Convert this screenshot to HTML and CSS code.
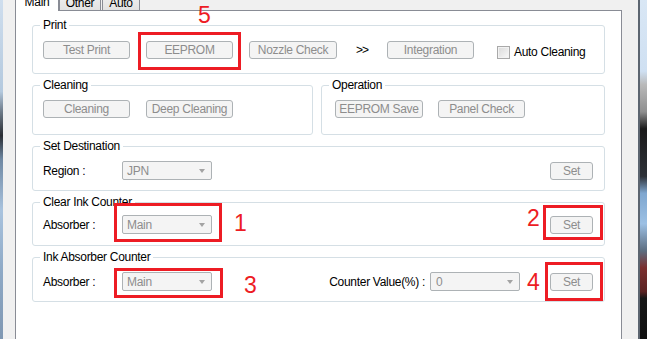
FILE: index.html
```html
<!DOCTYPE html>
<html lang="en">
<head>
<meta charset="utf-8">
<title>Maintenance</title>
<link rel="stylesheet" href="styles.css">
</head>
<body>
<div class="screen">
  <div class="desk desk-left"></div>
  <div class="window">
    <div class="tabs">
      <div class="tab tab-main active">Main</div>
      <div class="tab tab-other">Other</div>
      <div class="tab tab-auto">Auto</div>
    </div>
    <div class="panel">
      <fieldset class="group group-print">
        <legend>Print</legend>
        <div class="row">
          <button class="btn w87" disabled>Test Print</button>
          <button class="btn w87" disabled>EEPROM</button>
          <button class="btn w88" disabled>Nozzle Check</button>
          <span class="arrows">&gt;&gt;</span>
          <button class="btn w87" disabled>Integration</button>
          <label class="check"><span class="check-box"></span>Auto Cleaning</label>
        </div>
      </fieldset>

      <div class="split">
        <fieldset class="group group-clean">
          <legend>Cleaning</legend>
          <div class="row">
            <button class="btn w87" disabled>Cleaning</button>
            <button class="btn w87" disabled>Deep Cleaning</button>
          </div>
        </fieldset>
        <fieldset class="group group-clean">
          <legend>Operation</legend>
          <div class="row row-op">
            <button class="btn w88" disabled>EEPROM Save</button>
            <button class="btn w87" disabled>Panel Check</button>
          </div>
        </fieldset>
      </div>

      <fieldset class="group group-dest">
        <legend>Set Destination</legend>
        <div class="row row-field">
          <span class="label">Region :</span>
          <span class="combo">JPN<span class="caret"></span></span>
          <button class="btn btn-set" disabled>Set</button>
        </div>
      </fieldset>

      <fieldset class="group group-clear">
        <legend>Clear Ink Counter</legend>
        <div class="row row-field">
          <span class="label">Absorber :</span>
          <span class="combo">Main<span class="caret"></span></span>
          <button class="btn btn-set" disabled>Set</button>
        </div>
      </fieldset>

      <fieldset class="group group-ink">
        <legend>Ink Absorber Counter</legend>
        <div class="row row-field">
          <span class="label">Absorber :</span>
          <span class="combo">Main<span class="caret"></span></span>
          <span class="label-right">Counter Value(%) :</span>
          <span class="combo combo-value">0<span class="caret"></span></span>
          <button class="btn btn-set btn-set-ink" disabled>Set</button>
        </div>
      </fieldset>
    </div>
  </div>
  <div class="desk desk-right"></div>

  <div class="mark mark-5"></div>
  <div class="mark mark-1"></div>
  <div class="mark mark-2"></div>
  <div class="mark mark-3"></div>
  <div class="mark mark-4"></div>
  <span class="num num-5">5</span>
  <span class="num num-1">1</span>
  <span class="num num-2">2</span>
  <span class="num num-3">3</span>
  <span class="num num-4">4</span>
</div>
</body>
</html>
```

FILE: styles.css
```css
* { box-sizing: border-box; }

body {
  margin: 0;
  background: #f0f0f0;
  font-family: "Liberation Sans", Arial, sans-serif;
  font-size: 12px;
  letter-spacing: -0.3px;
  color: #000;
}

.screen {
  position: relative;
  display: flex;
  width: 647px;
  height: 339px;
  overflow: hidden;
}

.desk-left {
  width: 3px;
  background: linear-gradient(to bottom,
    #cfdeee 0%, #b4c9de 27%, #6d7a88 33%, #2a2e34 40%,
    #6f88a3 47%, #a9c3de 62%, #8ea9c6 80%, #7f97b2 100%);
}

.window {
  width: 635px;
  padding: 0 16px 0 12px;
  background: #f0f0f0;
  display: flex;
  flex-direction: column;
}

.desk-right {
  width: 9px;
  border-left: 2px solid #5c6570;
  background: linear-gradient(to bottom,
    #d9e7f5 0%, #cfe0f2 21%, #b9b9b9 25%, #8e8e8e 33%,
    #1a1a1a 38%, #2d3138 52%, #7ea6cf 57%, #9cc0e4 66%,
    #5c6d80 74%, #7b2f2f 79%, #5a2222 86%, #161616 88%, #101010 100%);
}

/* tabs */
.tabs {
  display: flex;
  align-items: flex-end;
  height: 20px;
  margin-top: -10px;
}

.tab {
  height: 20px;
  border: 1px solid #898c95;
  border-bottom: none;
  background: linear-gradient(#f3f3f3, #e2e2e2);
  text-align: center;
  line-height: 14px;
  padding-top: 5px;
}

.tab.active {
  position: relative;
  z-index: 1;
  height: 21px;
  margin-bottom: -1px;
  padding-top: 4px;
  background: #fff;
}

.tab-main { width: 44px; }
.tab-other { width: 42px; }
.tab-auto { width: 38px; margin-left: 1px; }

/* panel */
.panel {
  flex: 1;
  background: #fff;
  border: 1px solid #898c95;
  border-bottom: none;
  padding: 7px 16px 0;
  display: flex;
  flex-direction: column;
  gap: 4px;
}

.group {
  margin: 0;
  min-inline-size: 0;
  border: 1px solid #d5dfe5;
  border-radius: 3px;
  padding: 8px 10px 15px;
}

.group legend {
  padding: 0 3px;
  margin-left: -3px;
  line-height: 14px;
}

.group-print { padding-top: 9px; padding-bottom: 14px; }
.group-clean { padding-bottom: 16px; }
.group-dest { padding: 8px 11px 10px 10px; }
.group-clear { padding: 6px 11px 11px 10px; }
.group-ink { padding: 8px 11px 10px 10px; }

.split {
  display: grid;
  grid-template-columns: 281px 1fr;
  column-gap: 8px;
}

.row {
  display: flex;
  align-items: center;
  gap: 16px;
  height: 18px;
}

.row-op { margin-left: 3px; gap: 15px; }

.row-field {
  height: 19px;
  gap: 0;
}

/* buttons */
.btn {
  height: 18px;
  margin: 0;
  padding: 0;
  border: 1px solid #adb2b5;
  border-radius: 3px;
  background: #f4f4f4;
  color: #8d8d8d;
  font-family: inherit;
  font-size: 12px;
  letter-spacing: -0.3px;
  line-height: 16px;
  text-align: center;
}

.w87 { width: 87px; }
.w88 { width: 88px; }

.arrows {
  width: 18px;
  text-align: center;
  letter-spacing: -1px;
}

.check {
  display: flex;
  align-items: center;
  gap: 4px;
  margin-left: 7px;
  padding-top: 4px;
}

.check-box {
  width: 13px;
  height: 13px;
  border: 1px solid #a9a9a9;
  box-shadow: inset 0 0 0 1px #f2f2f2;
  background: linear-gradient(135deg, #d9d9d9, #f9f9f9);
}

/* fields */
.label { width: 79px; }

.combo {
  width: 90px;
  height: 19px;
  display: flex;
  align-items: center;
  padding-left: 4px;
  border: 1px solid #adb2b5;
  border-radius: 2px;
  background: #f4f4f4;
  color: #8d8d8d;
}

.combo-value { padding-left: 5px; }

.caret {
  margin-left: auto;
  margin-right: 6px;
  width: 0;
  height: 0;
  border-left: 3px solid transparent;
  border-right: 3px solid transparent;
  border-top: 4px solid #a3a3a3;
}

.btn-set {
  width: 43px;
  margin-left: auto;
}

.label-right {
  margin-left: auto;
  margin-right: 5px;
}

.btn-set-ink { margin-left: 30px; }

/* annotations */
.mark {
  position: absolute;
  border: 3px solid #ed1c24;
}

.mark-5 { left: 138px; top: 32px; width: 103px; height: 38px; }
.mark-1 { left: 114px; top: 203px; width: 108px; height: 39px; }
.mark-2 { left: 543px; top: 205px; width: 60px; height: 35px; }
.mark-3 { left: 114px; top: 268px; width: 109px; height: 30px; }
.mark-4 { left: 545px; top: 262px; width: 58px; height: 39px; }

.num {
  position: absolute;
  color: #ed1c24;
  font-size: 23px;
  line-height: 23px;
  letter-spacing: 0;
}

.num-5 { left: 198px; top: 4px; }
.num-1 { left: 234px; top: 212px; }
.num-2 { left: 527px; top: 207px; }
.num-3 { left: 244px; top: 274px; }
.num-4 { left: 527px; top: 271px; }
```
